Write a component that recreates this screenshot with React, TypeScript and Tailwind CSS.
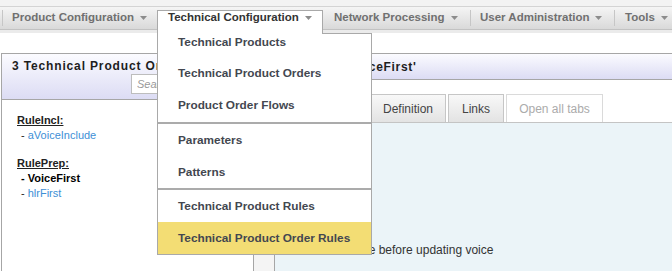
import { useState } from 'react';

const ORDER_MENU: (string | null)[] = [
  'Technical Products',
  'Technical Product Orders',
  'Product Order Flows',
  null,
  'Parameters',
  'Patterns',
  null,
  'Technical Product Rules',
  'Technical Product Order Rules',
];

function Caret() {
  return (
    <svg width="7" height="4" viewBox="0 0 7 4" className="shrink-0">
      <path d="M0 0h7L3.5 4z" fill="#8c8c8c" />
    </svg>
  );
}

function MenuSep() {
  return <div className="w-px my-[3px] bg-[#c6c6c6]" />;
}

export default function App() {
  const [hover] = useState('Technical Product Order Rules');

  return (
    <div className="w-[672px] h-[271px] overflow-hidden bg-white font-['Liberation_Sans',Arial,sans-serif]">
      <div className="h-[7px] bg-[#f3f3f3] border-b border-[#d4d4d4]" />

      <div className="h-[23px] flex border-b border-[#c2c2c2] bg-linear-to-b from-[#f5f5f5] to-[#d9d9d9] text-[11.5px] font-bold">
        <div className="w-[2px]" />
        <MenuSep />
        <div className="w-[154px] pl-[9px] flex items-center gap-[6px] text-[#707070]">
          <span>Product Configuration</span>
          <Caret />
        </div>

        <div className="relative w-[166px]">
          <div className="relative z-20 mt-[3px] h-[24px] border border-b-0 border-[#a9a9a9] bg-white pl-[10px]">
            <div className="h-[14px] flex items-center gap-[6px] text-[#333]">
              <span>Technical Configuration</span>
              <Caret />
            </div>
          </div>

          <div className="absolute z-10 left-0 top-[26px] w-[215px] border border-[#a9a9a9] bg-white flex flex-col">
            {ORDER_MENU.map((item, i) =>
              item === null ? (
                <div key={i} className={`h-[2px] bg-[#ababab] ${i === 3 ? 'mt-px' : ''}`} />
              ) : (
                <div
                  key={item}
                  className={`pl-[20px] text-[11.8px] leading-[16px] text-[#434750] flex ${
                    i === 0 ? 'h-[23px] items-start' : 'h-[32px] items-center'
                  } ${hover === item ? 'bg-[#f3dd74]' : ''}`}
                >
                  {item}
                </div>
              )
            )}
          </div>
        </div>

        <div className="w-[147px] pl-[11px] flex items-center gap-[6px] text-[#707070]">
          <span>Network Processing</span>
          <Caret />
        </div>
        <MenuSep />
        <div className="w-[143px] pl-[9px] flex items-center gap-[6px] text-[#707070]">
          <span>User Administration</span>
          <Caret />
        </div>
        <MenuSep />
        <div className="pl-[10px] flex items-center gap-[6px] text-[#707070]">
          <span>Tools</span>
          <Caret />
        </div>
      </div>

      <div className="h-[3px] bg-[#ebebeb]" />
      <div className="h-[20px]" />

      <div className="flex h-[218px]">
        <div className="w-[253px] ml-px border border-b-0 border-[#a6a6a6] bg-white flex flex-col">
          <div className="h-[46px] border-b border-[#a6a6a6] bg-linear-to-b from-[#fbfbff] to-[#dcdcf4]">
            <div className="pl-[10px] pt-[4px] leading-[16px] text-[12px] font-bold tracking-[0.85px] text-[#1e1e1e] whitespace-nowrap overflow-hidden">
              3 Technical Product Order Rules
            </div>
            <div className="flex justify-end pr-[7px]">
              <input
                className="h-[20px] w-[115px] border border-[#bdbdbd] bg-white pl-[5px] text-[11px] italic placeholder:text-[#9a9a9a] focus:outline-none"
                placeholder="Search..."
              />
            </div>
          </div>

          <div className="pt-[12px] pl-[15px] text-[11px] text-[#222]">
            <div className="leading-[16px] font-bold underline">RuleIncl:</div>
            <div className="leading-[15px] pl-[4px]">
              - <span className="text-[#3d8fd6]">aVoiceInclude</span>
            </div>
            <div className="mt-[12px] leading-[16px] font-bold underline">RulePrep:</div>
            <div className="leading-[15px] pl-[4px] font-bold text-black">- VoiceFirst</div>
            <div className="leading-[15px] pl-[4px]">
              - <span className="text-[#3d8fd6]">hlrFirst</span>
            </div>
          </div>
        </div>

        <div className="w-[20px] bg-[#f4f4f4]" />

        <div className="flex-1 border-l border-[#a6a6a6] flex flex-col">
          <div className="h-[27px] border-y border-[#a6a6a6] bg-linear-to-b from-[#fbfbff] to-[#dcdcf4] pl-[8px] flex items-center text-[12px] font-bold tracking-[0.7px] text-[#1e1e1e] whitespace-nowrap">
            Edit Rule 'VoiceFirst'
          </div>

          <div className="bg-white pt-[14px] pl-[11px] flex gap-[2px] text-[12px]">
            <div className="w-[82px] h-[28px] border border-b-0 border-[#c6c6c6] bg-linear-to-b from-[#f8f8f8] to-[#e3e3e3] flex items-center justify-center text-[#444]">
              General
            </div>
            <div className="w-[76px] h-[28px] border border-b-0 border-[#c6c6c6] bg-linear-to-b from-[#f8f8f8] to-[#e3e3e3] flex items-center justify-center text-[#444]">
              Definition
            </div>
            <div className="w-[56px] h-[28px] border border-b-0 border-[#c6c6c6] bg-linear-to-b from-[#f8f8f8] to-[#e3e3e3] flex items-center justify-center text-[#444]">
              Links
            </div>
            <div className="w-[97px] h-[28px] border border-b-0 border-[#dadada] bg-white flex items-center justify-center text-[#ababab]">
              Open all tabs
            </div>
          </div>

          <div className="flex-1 border-t border-[#c4c4c4] bg-[#ebf4f8] pt-[119px] pl-[15px] text-[12px] leading-[16px] text-[#333]">
            Run hlrFirst rule before updating voice
          </div>
        </div>
      </div>
    </div>
  );
}
